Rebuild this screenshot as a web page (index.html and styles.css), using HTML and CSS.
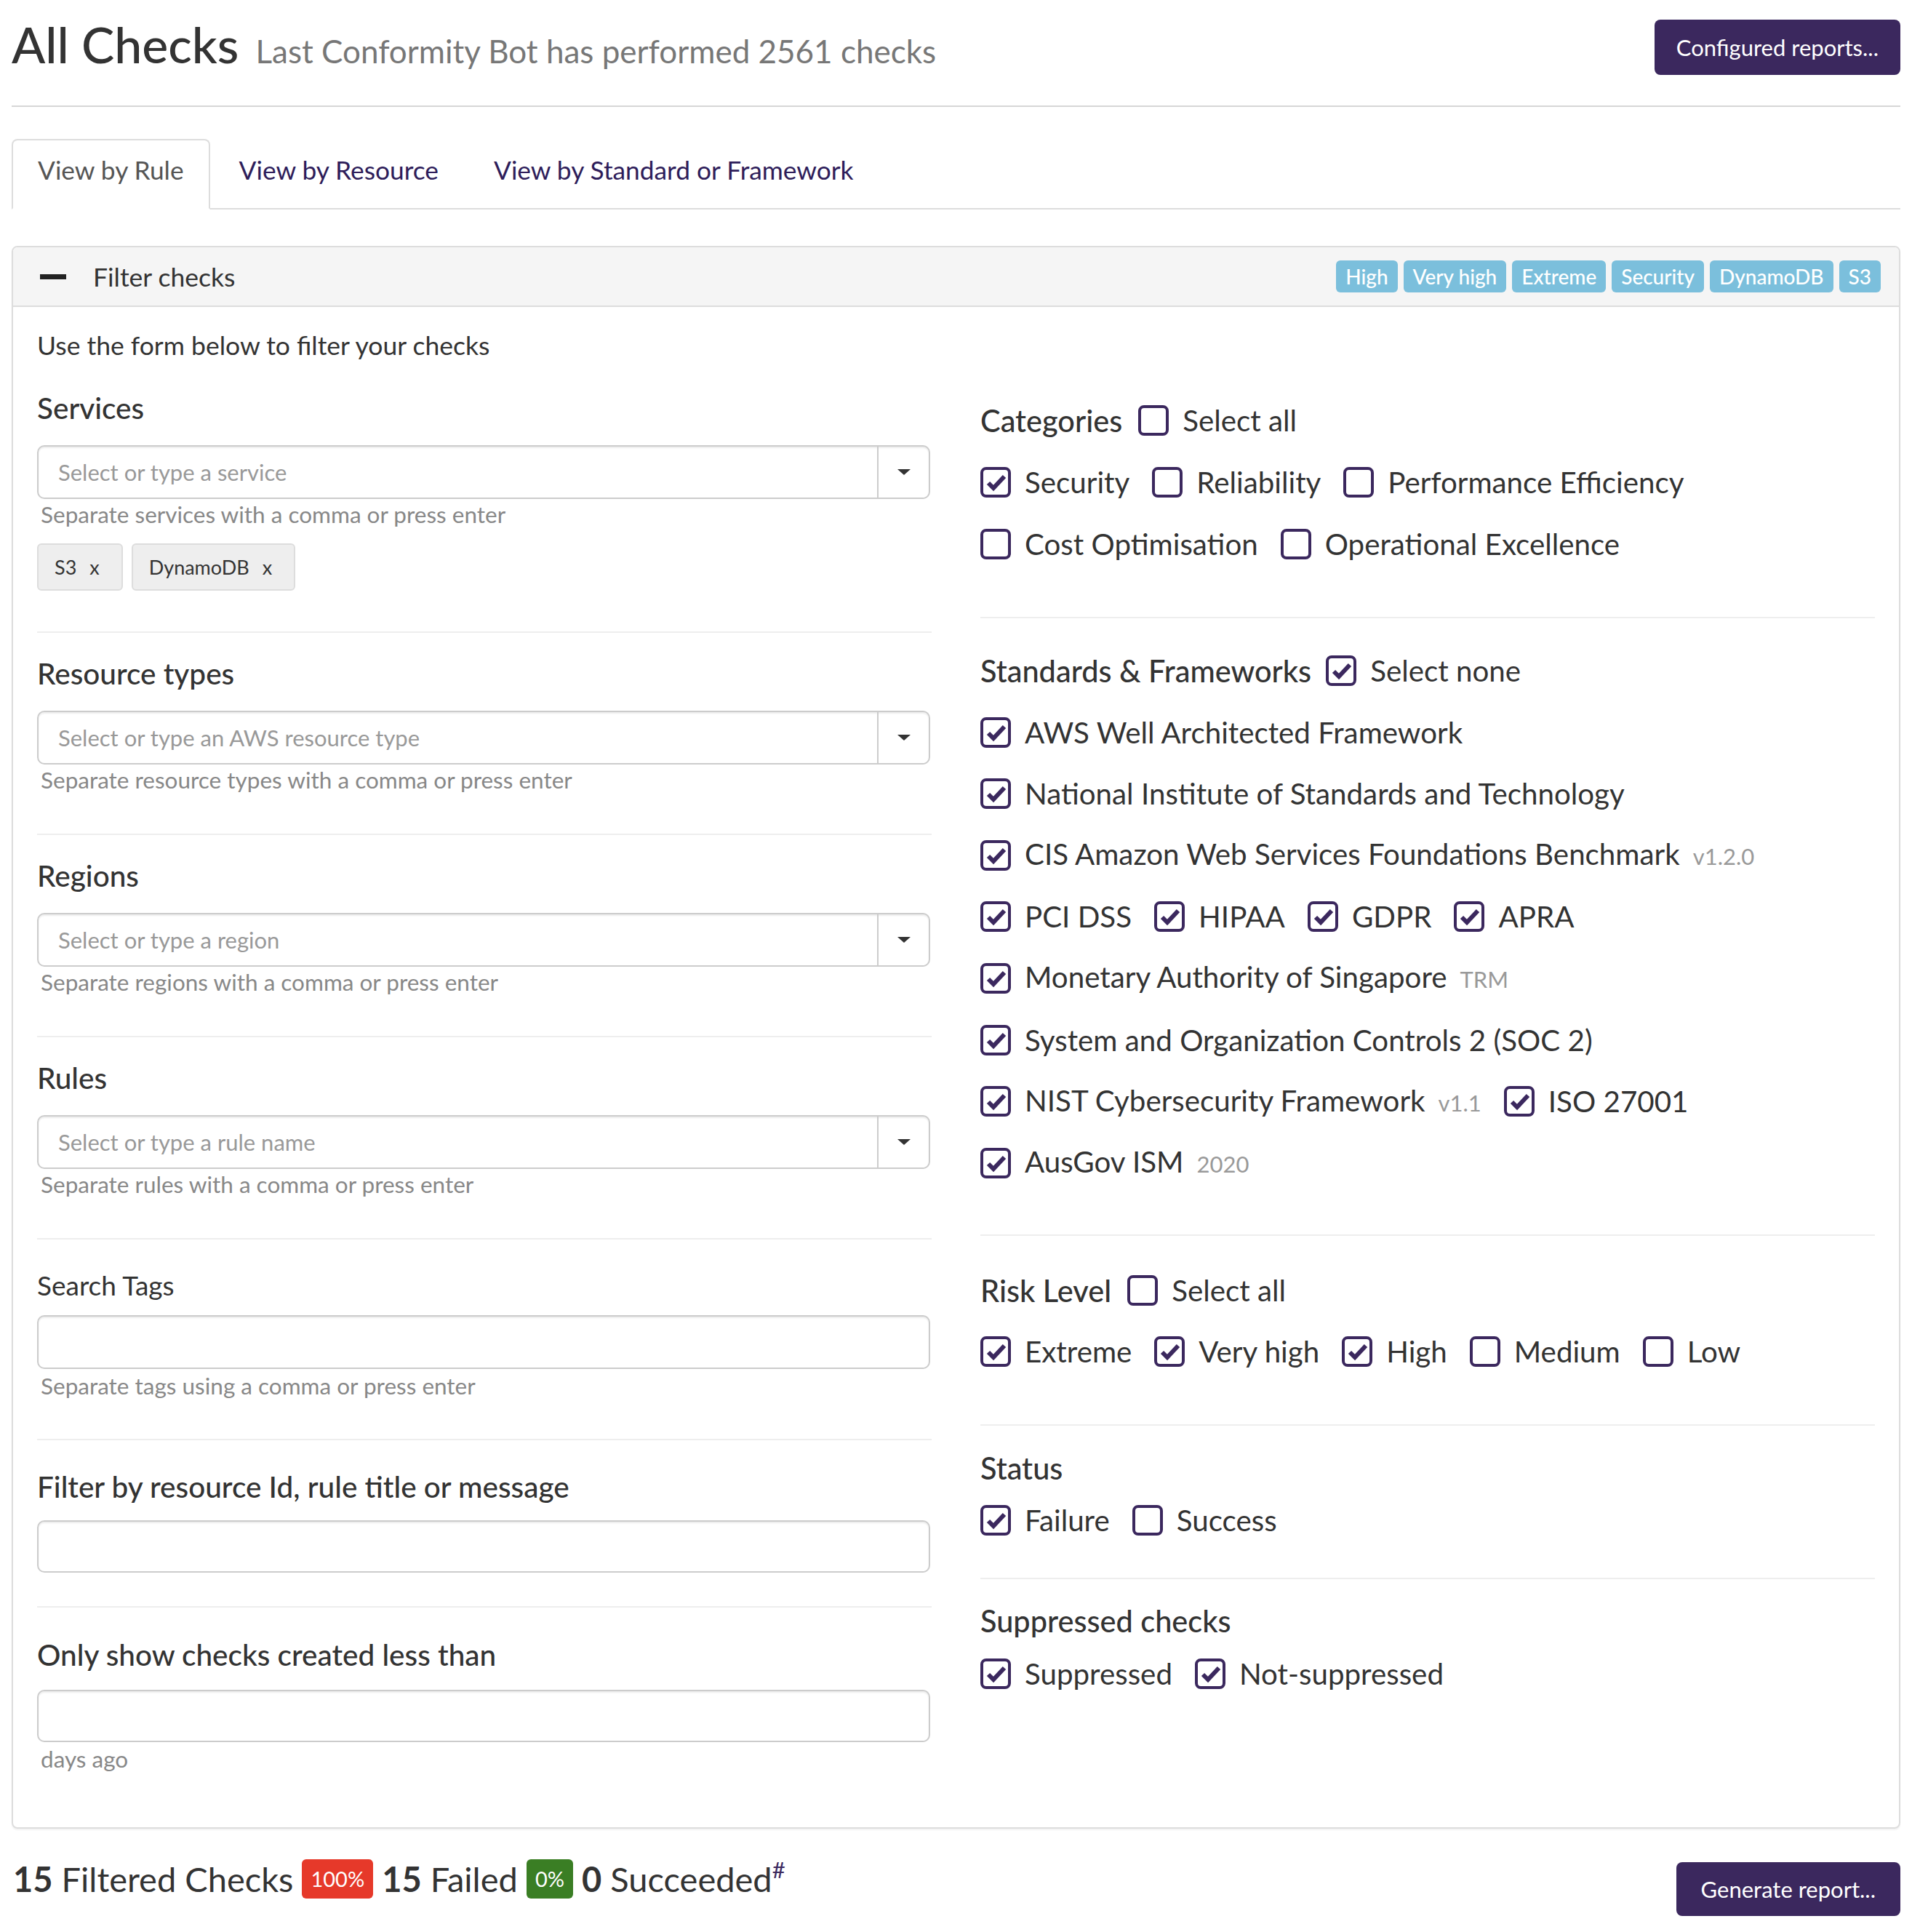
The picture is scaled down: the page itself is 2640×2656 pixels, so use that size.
FILE: index.html
```html
<!DOCTYPE html>
<html lang="en">
<head>
<meta charset="utf-8">
<title>All Checks</title>
<link rel="stylesheet" href="styles.css">
</head>
<body>
<div class="page">
  <header class="page-header">
    <h1 class="title">All Checks <small>Last Conformity Bot has performed 2561 checks</small></h1>
    <button class="btn btn-head">Configured reports...</button>
  </header>

  <nav class="tabs">
    <a class="tab active">View by Rule</a>
    <a class="tab">View by Resource</a>
    <a class="tab">View by Standard or Framework</a>
  </nav>

  <section class="panel">
    <div class="panel-heading">
      <span class="minus"></span>
      <span class="panel-title">Filter checks</span>
      <div class="badges">
        <span class="badge-info">High</span>
        <span class="badge-info">Very high</span>
        <span class="badge-info">Extreme</span>
        <span class="badge-info">Security</span>
        <span class="badge-info">DynamoDB</span>
        <span class="badge-info">S3</span>
      </div>
    </div>
    <div class="panel-body">
      <p class="intro">Use the form below to filter your checks</p>
      <div class="cols">
        <div class="col">
          <div class="fg fg-services">
            <h3 class="fh">Services</h3>
            <div class="select sel-gap">
              <div class="select-input">Select or type a service</div>
              <div class="select-arrow"><span class="caret"></span></div>
            </div>
            <p class="help">Separate services with a comma or press enter</p>
            <div class="chips">
              <span class="chip">S3<span class="x">x</span></span>
              <span class="chip">DynamoDB<span class="x">x</span></span>
            </div>
          </div>
          <div class="fg fg-std">
            <h3 class="fh">Resource types</h3>
            <div class="select sel-gap">
              <div class="select-input">Select or type an AWS resource type</div>
              <div class="select-arrow"><span class="caret"></span></div>
            </div>
            <p class="help">Separate resource types with a comma or press enter</p>
          </div>
          <div class="fg fg-std">
            <h3 class="fh">Regions</h3>
            <div class="select sel-gap">
              <div class="select-input">Select or type a region</div>
              <div class="select-arrow"><span class="caret"></span></div>
            </div>
            <p class="help">Separate regions with a comma or press enter</p>
          </div>
          <div class="fg fg-std">
            <h3 class="fh">Rules</h3>
            <div class="select sel-gap">
              <div class="select-input">Select or type a rule name</div>
              <div class="select-arrow"><span class="caret"></span></div>
            </div>
            <p class="help">Separate rules with a comma or press enter</p>
          </div>
          <div class="fg fg-tags">
            <h3 class="fh light">Search Tags</h3>
            <div class="input input-tags"></div>
            <p class="help help-tight">Separate tags using a comma or press enter</p>
          </div>
          <div class="fg fg-filter">
            <h3 class="fh">Filter by resource Id, rule title or message</h3>
            <div class="input input-filter"></div>
          </div>
          <div class="fg fg-days">
            <h3 class="fh">Only show checks created less than</h3>
            <div class="input input-days"></div>
            <p class="help help-tight">days ago</p>
          </div>
        </div>

        <div class="col">
          <div class="rg rg-cat">
            <div class="row">
              <span class="rh">Categories</span>
              <span class="opt"><span class="cb"></span>Select all</span>
            </div>
            <div class="row">
              <span class="opt"><span class="cb on"><svg viewBox="0 0 34 34"><path d="M7 18 L14 25 L29 9"/></svg></span>Security</span>
              <span class="opt"><span class="cb"></span>Reliability</span>
              <span class="opt"><span class="cb"></span>Performance Efficiency</span>
            </div>
            <div class="row">
              <span class="opt"><span class="cb"></span>Cost Optimisation</span>
              <span class="opt"><span class="cb"></span>Operational Excellence</span>
            </div>
          </div>

          <div class="rg rg-std">
            <div class="row">
              <span class="rh rh-tight">Standards &amp; Frameworks</span>
              <span class="opt"><span class="cb on"><svg viewBox="0 0 34 34"><path d="M7 18 L14 25 L29 9"/></svg></span>Select none</span>
            </div>
            <div class="row">
              <span class="opt"><span class="cb on"><svg viewBox="0 0 34 34"><path d="M7 18 L14 25 L29 9"/></svg></span>AWS Well Architected Framework</span>
            </div>
            <div class="row">
              <span class="opt"><span class="cb on"><svg viewBox="0 0 34 34"><path d="M7 18 L14 25 L29 9"/></svg></span>National Institute of Standards and Technology</span>
            </div>
            <div class="row">
              <span class="opt"><span class="cb on"><svg viewBox="0 0 34 34"><path d="M7 18 L14 25 L29 9"/></svg></span><span>CIS Amazon Web Services Foundations Benchmark<span class="ver">v1.2.0</span></span></span>
            </div>
            <div class="row">
              <span class="opt"><span class="cb on"><svg viewBox="0 0 34 34"><path d="M7 18 L14 25 L29 9"/></svg></span>PCI DSS</span>
              <span class="opt"><span class="cb on"><svg viewBox="0 0 34 34"><path d="M7 18 L14 25 L29 9"/></svg></span>HIPAA</span>
              <span class="opt"><span class="cb on"><svg viewBox="0 0 34 34"><path d="M7 18 L14 25 L29 9"/></svg></span>GDPR</span>
              <span class="opt"><span class="cb on"><svg viewBox="0 0 34 34"><path d="M7 18 L14 25 L29 9"/></svg></span>APRA</span>
            </div>
            <div class="row">
              <span class="opt"><span class="cb on"><svg viewBox="0 0 34 34"><path d="M7 18 L14 25 L29 9"/></svg></span><span>Monetary Authority of Singapore<span class="ver">TRM</span></span></span>
            </div>
            <div class="row">
              <span class="opt"><span class="cb on"><svg viewBox="0 0 34 34"><path d="M7 18 L14 25 L29 9"/></svg></span>System and Organization Controls 2 (SOC 2)</span>
            </div>
            <div class="row">
              <span class="opt"><span class="cb on"><svg viewBox="0 0 34 34"><path d="M7 18 L14 25 L29 9"/></svg></span><span>NIST Cybersecurity Framework<span class="ver">v1.1</span></span></span>
              <span class="opt"><span class="cb on"><svg viewBox="0 0 34 34"><path d="M7 18 L14 25 L29 9"/></svg></span>ISO 27001</span>
            </div>
            <div class="row">
              <span class="opt"><span class="cb on"><svg viewBox="0 0 34 34"><path d="M7 18 L14 25 L29 9"/></svg></span><span>AusGov ISM<span class="ver">2020</span></span></span>
            </div>
          </div>

          <div class="rg rg-risk">
            <div class="row">
              <span class="rh">Risk Level</span>
              <span class="opt"><span class="cb"></span>Select all</span>
            </div>
            <div class="row">
              <span class="opt"><span class="cb on"><svg viewBox="0 0 34 34"><path d="M7 18 L14 25 L29 9"/></svg></span>Extreme</span>
              <span class="opt"><span class="cb on"><svg viewBox="0 0 34 34"><path d="M7 18 L14 25 L29 9"/></svg></span>Very high</span>
              <span class="opt"><span class="cb on"><svg viewBox="0 0 34 34"><path d="M7 18 L14 25 L29 9"/></svg></span>High</span>
              <span class="opt"><span class="cb"></span>Medium</span>
              <span class="opt"><span class="cb"></span>Low</span>
            </div>
          </div>

          <div class="rg rg-status">
            <div class="row"><span class="rh">Status</span></div>
            <div class="row row-after-h">
              <span class="opt"><span class="cb on"><svg viewBox="0 0 34 34"><path d="M7 18 L14 25 L29 9"/></svg></span>Failure</span>
              <span class="opt"><span class="cb"></span>Success</span>
            </div>
          </div>

          <div class="rg rg-supp">
            <div class="row"><span class="rh">Suppressed checks</span></div>
            <div class="row row-after-h">
              <span class="opt"><span class="cb on"><svg viewBox="0 0 34 34"><path d="M7 18 L14 25 L29 9"/></svg></span>Suppressed</span>
              <span class="opt"><span class="cb on"><svg viewBox="0 0 34 34"><path d="M7 18 L14 25 L29 9"/></svg></span>Not-suppressed</span>
            </div>
          </div>
        </div>
      </div>
    </div>
  </section>

  <footer class="summary">
    <div class="stats"><b>15</b> Filtered Checks <span class="lbl-badge red">100%</span> <b>15</b> Failed <span class="lbl-badge green">0%</span> <b>0</b> Succeeded<sup>#</sup></div>
    <button class="btn btn-gen">Generate report...</button>
  </footer>
</div>
</body>
</html>
```

FILE: styles.css
```css
* { box-sizing: border-box; }

body {
  margin: 0;
  background: #fff;
  color: #333;
  font-family: Lato, "Open Sans", sans-serif;
}

.page {
  width: 2597px;
  margin-left: 16px;
}

/* header */
.page-header {
  display: flex;
  justify-content: space-between;
  align-items: flex-start;
  height: 147px;
  padding-top: 18px;
  border-bottom: 2px solid #d6d6d6;
}

.title {
  margin: 0;
  font-size: 68px;
  line-height: 86px;
  font-weight: 500;
  color: #333;
}

.title small {
  font-size: 44px;
  font-weight: 400;
  color: #777;
  margin-left: 6px;
}

.btn {
  background: #3b285e;
  color: #fff;
  border: none;
  border-radius: 8px;
  font-family: Lato, "Open Sans", sans-serif;
  font-size: 31px;
  cursor: pointer;
}

.btn-head {
  margin-top: 9px;
  height: 76px;
  padding: 0 30px;
}

/* tabs */
.tabs {
  display: flex;
  margin-top: 44px;
  border-bottom: 2px solid #ddd;
}

.tab {
  display: block;
  height: 97px;
  padding: 20px 34px 0;
  margin-bottom: -2px;
  margin-right: 4px;
  border: 2px solid transparent;
  border-radius: 8px 8px 0 0;
  font-size: 35.3px;
  line-height: 41px;
  color: #2e1d5a;
  text-decoration: none;
}

.tab.active {
  color: #555;
  background: #fff;
  border-color: #ddd;
  border-bottom-color: #fff;
}

/* panel */
.panel {
  margin-top: 50px;
  border: 2px solid #ddd;
  border-radius: 8px;
  box-shadow: 0 2px 2px rgba(0, 0, 0, 0.05);
}

.panel-heading {
  display: flex;
  align-items: center;
  height: 82px;
  padding: 0 25px 0 37px;
  background: #f5f5f5;
  border-bottom: 2px solid #ddd;
  border-radius: 6px 6px 0 0;
}

.minus {
  width: 36px;
  height: 7px;
  background: #222;
}

.panel-title {
  margin-left: 37px;
  font-size: 35.5px;
  color: #333;
}

.badges {
  margin-left: auto;
  display: flex;
  gap: 8px;
}

.badge-info {
  height: 44px;
  line-height: 44px;
  padding: 0 13px;
  background: #7bbfdc;
  color: #fff;
  font-size: 28px;
  font-weight: 500;
  border-radius: 6px;
}

.panel-body {
  padding: 29px 33px 76px;
}

.intro {
  margin: 0;
  font-size: 35.5px;
  line-height: 48px;
}

.cols {
  display: flex;
  justify-content: space-between;
}

.col {
  width: 1230px;
}

/* left form groups */
.fg {
  border-bottom: 2px solid #eee;
}

.fg:last-child {
  border-bottom: none;
}

.fg-services { padding: 39px 0 56px; }
.fg-std { padding: 33px 0 56px; }
.fg-tags { padding: 40px 0 55px; }
.fg-filter { padding: 41px 0 46px; }
.fg-days { padding: 42px 0 0; }

.fh {
  margin: 0;
  font-size: 40.5px;
  line-height: 46px;
  font-weight: 500;
  color: #333;
}

.fh.light {
  font-size: 37px;
  font-weight: 400;
}

.select {
  display: flex;
  width: 1228px;
  height: 74px;
  border: 2px solid #ccc;
  border-radius: 10px;
  box-shadow: inset 0 2px 2px rgba(0, 0, 0, 0.075);
}

.sel-gap { margin-top: 28px; }

.select-input {
  flex: 1;
  display: flex;
  align-items: center;
  padding-left: 27px;
  font-size: 31px;
  color: #999;
}

.select-arrow {
  width: 71px;
  border-left: 2px solid #ccc;
  display: flex;
  align-items: center;
  justify-content: center;
}

.caret {
  width: 0;
  height: 0;
  border-left: 9px solid transparent;
  border-right: 9px solid transparent;
  border-top: 8px solid #333;
}

.input {
  width: 1228px;
  border: 2px solid #ccc;
  border-radius: 10px;
  box-shadow: inset 0 2px 2px rgba(0, 0, 0, 0.075);
}

.input-tags { margin-top: 18px; height: 74px; }
.input-filter { margin-top: 23px; height: 72px; }
.input-days { margin-top: 25px; height: 72px; }

.help {
  margin: 3px 0 0;
  padding-left: 5px;
  font-size: 31.5px;
  line-height: 36px;
  color: #888;
}

.help-tight { margin-top: 5px; }

.chips {
  display: flex;
  gap: 12px;
  margin-top: 22px;
}

.chip {
  display: flex;
  align-items: center;
  height: 65px;
  padding: 0 30px 0 22px;
  background: #eee;
  border: 2px solid #ddd;
  border-radius: 6px;
  font-size: 27px;
  color: #333;
}

.chip .x {
  margin-left: 18px;
}

/* right groups */
.rg {
  border-bottom: 2px solid #eee;
}

.rg:last-child {
  border-bottom: none;
}

.rg-cat { padding: 58px 0 79px; }
.rg-std { padding: 51px 0 77px; }
.rg-risk { padding: 54px 0 79px; }
.rg-status { padding: 37px 0 58px; }
.rg-supp { padding: 36px 0 0; }

.row {
  display: flex;
  align-items: center;
  height: 42px;
  font-size: 40.3px;
  line-height: 42px;
}

.row + .row { margin-top: 43px; }
.rg-std .row + .row { margin-top: 42.6px; }
.rg-risk .row + .row { margin-top: 42px; }
.row.row-after-h { margin-top: 30px; }
.rg-supp .row.row-after-h { margin-top: 31px; }

.rh {
  font-weight: 500;
  font-size: 41.5px;
  margin-right: 22px;
}

.rh-tight { margin-right: 20px; }

.opt {
  display: flex;
  align-items: center;
  margin-right: 31px;
  color: #333;
}

.cb {
  display: block;
  flex: none;
  width: 42px;
  height: 42px;
  margin-right: 19px;
  border: 4px solid #3b285e;
  border-radius: 8px;
}

.cb svg {
  display: block;
  width: 34px;
  height: 34px;
}

.cb path {
  fill: none;
  stroke: #3b285e;
  stroke-width: 6;
}

.ver {
  margin-left: 18px;
  font-size: 31px;
  color: #999;
}

/* summary */
.summary {
  display: flex;
  justify-content: space-between;
  align-items: flex-start;
}

.stats {
  margin-top: 41px;
  padding-left: 2px;
  font-size: 47px;
  line-height: 56px;
  color: #333;
}

.stats b {
  font-weight: 700;
}

.lbl-badge {
  display: inline-block;
  padding: 0 12px;
  font-size: 29px;
  line-height: 54px;
  color: #fff;
  border-radius: 6px;
  vertical-align: 7px;
}

.red { background: #e6392a; }
.green { background: #3a7e24; }

.stats sup {
  font-size: 31px;
  line-height: 30px;
  vertical-align: top;
  color: #3b285e;
}

.btn-gen {
  margin-top: 46px;
  height: 74px;
  padding: 0 34px;
}
```
